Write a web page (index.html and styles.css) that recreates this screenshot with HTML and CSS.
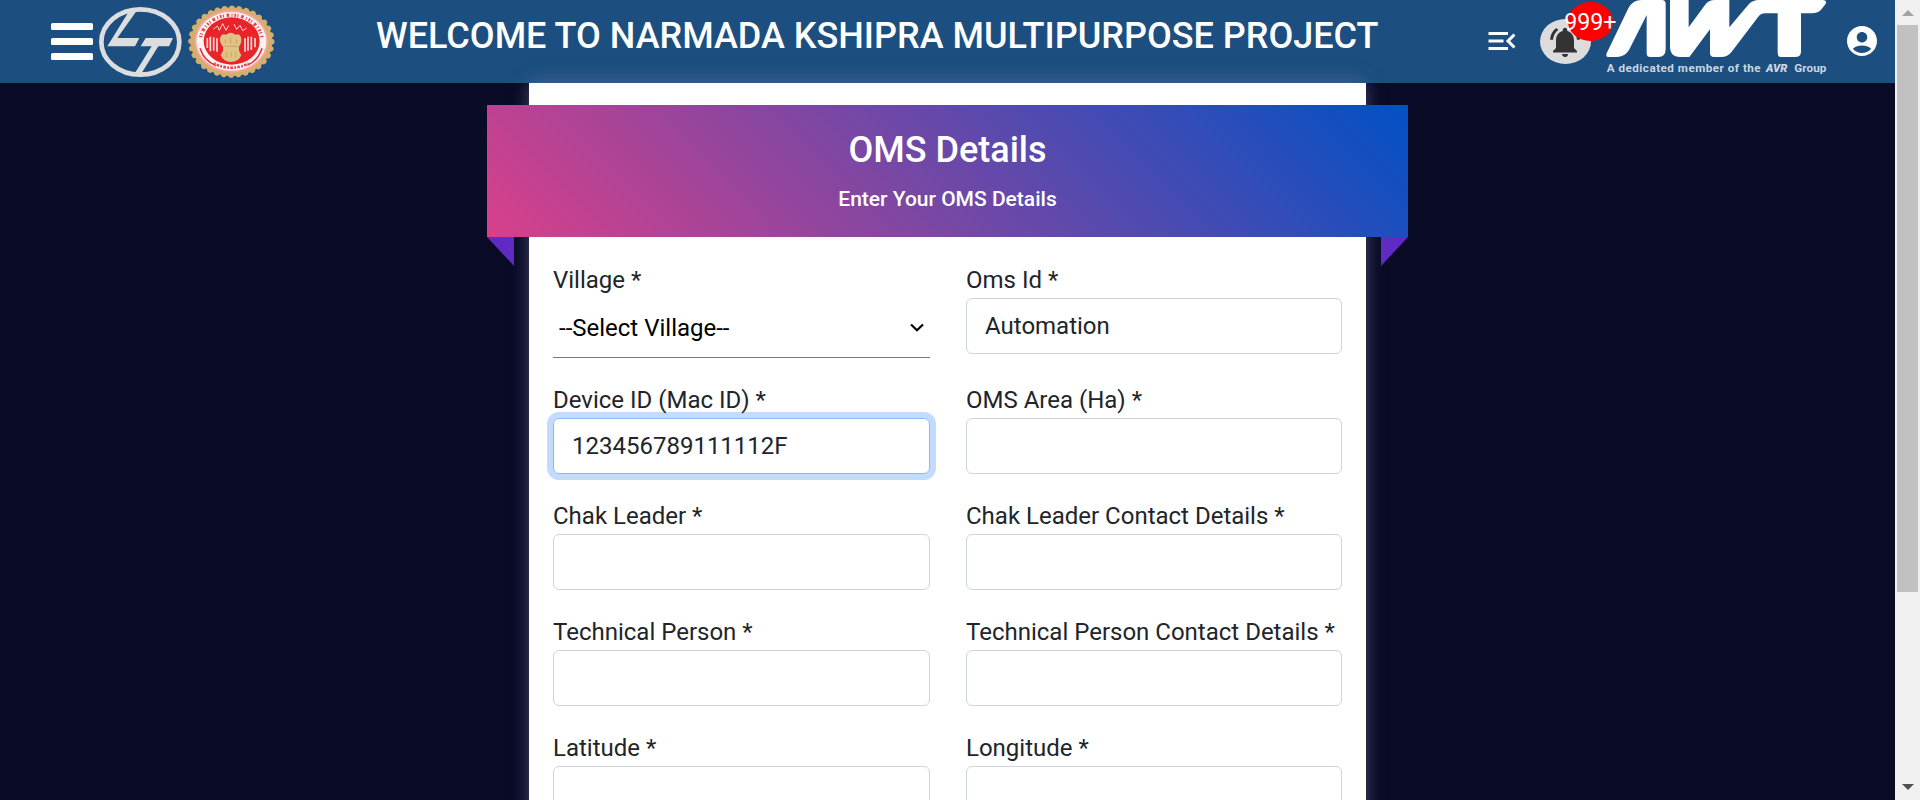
FILE: index.html
```html
<!DOCTYPE html>
<html lang="en">
<head>
<meta charset="utf-8">
<title>OMS Details</title>
<link rel="stylesheet" href="styles.css">
</head>
<body>
<div class="page">
  <header class="header">
    <div class="burger"><span></span><span></span><span></span></div>
    <svg class="logo-lt" viewBox="297 17 249 216">
      <g fill="#dcdddf"><path d="M386 34L408 34L352 113L418 113L405 138L322 138Z"/><path d="M437 113L519 113L507 138L475 138L425 218L405 218L455 138L422 138Z"/></g>
      <ellipse cx="421" cy="125" rx="117" ry="98" fill="none" stroke="#dcdddf" stroke-width="14"/>
    </svg>
    <svg class="emblem" viewBox="561 12 267 225">
      <ellipse cx="694" cy="125" rx="123" ry="103" fill="#d5ae69"/>
      <ellipse cx="694" cy="125" rx="121" ry="100" fill="none" stroke="#d5ae69" stroke-width="17" stroke-linecap="round" stroke-dasharray="0.1 21.68"/>
      <ellipse cx="694" cy="124" rx="111" ry="94" fill="#f5a3a3"/>
      <ellipse cx="694" cy="124" rx="105" ry="88" fill="#fff3f1"/>
      <path d="M602 112A93 78 0 0 1 786 112" fill="none" stroke="#e5464b" stroke-width="10" stroke-dasharray="5 4 3 8 8 7 3 6"/>
      <path d="M642 190A93 78 0 0 0 746 190" fill="none" stroke="#e5464b" stroke-width="8" stroke-dasharray="5 4 8 4"/>
      <ellipse cx="695" cy="123" rx="84" ry="71" fill="#e8232a"/>
      <g fill="none" stroke="#ffdcd9" stroke-width="5"><path d="M622 114v30M631 110v44M641 112v40M651 115v40M735 115v40M744 110v42M754 110v40M765 114v28"/><path d="M640 88l12-10 6 13 10-20 10 20 8-14M702 72l8 16 10-12 8 16 12-8" stroke-width="3"/></g>
      <path d="M600 145q12 38 48 52M786 145q-10 35-44 51" fill="none" stroke="#e5353a" stroke-width="5"/>
      <path d="M661 112q4-12 17-8 15-12 28 0 13-4 17 8 4 16-6 28v12l7 14q-8 20-31 20t-31-20l7-14v-12q-12-12-8-28z" fill="#dfc284"/>
      <path d="M676 118v12M692 112v18M710 118v12M673 139h42M680 157v16M693 157v16M706 157v16" stroke="#c7a567" stroke-width="3"/>
    </svg>
    <h1 class="title">WELCOME TO NARMADA KSHIPRA MULTIPURPOSE PROJECT</h1>
    <svg class="icon menu-open" viewBox="0 0 24 24"><path d="M3 18h13v-2H3v2zM3 13h10v-2H3v2zm0-7v2h13V6H3zm18 9.59L17.42 12 21 8.41 19.59 7l-5 5 5 5L21 15.59z"/></svg>
    <div class="bell">
      <svg class="icon bell-icon" viewBox="0 0 24 24"><path d="M7.58 4.08L6.15 2.65C3.75 4.48 2.17 7.3 2.03 10.5h2c.15-2.65 1.51-4.97 3.55-6.42zm12.39 6.42h2c-.15-3.2-1.73-6.02-4.12-7.85l-1.42 1.43c2.02 1.45 3.39 3.77 3.54 6.42zM18 11c0-3.07-1.64-5.64-4.5-6.32V4c0-.83-.67-1.5-1.5-1.5s-1.5.67-1.5 1.5v.68C7.63 5.36 6 7.92 6 11v5l-2 2v1h16v-1l-2-2v-5zm-6 11c.14 0 .27-.01.4-.04.65-.14 1.18-.58 1.44-1.18.1-.24.15-.5.15-.78h-4c.01 1.1.9 2 2.01 2z"/></svg>
      <span class="badge">999+</span>
    </div>
    <svg class="logo-awt" viewBox="438 0 663 249">
      <g fill="#fff">
        <path d="M440 160L505 25Q518 0 545 0H605Q617 0 617 12V148Q617 171 595 171H570Q560 171 560 160V45L507 150Q494 171 470 171H446Q436 171 440 160Z"/>
        <path d="M630 0H686V82L735 15Q745 0 765 0H808V82L865 14Q877 0 897 0H1090Q1103 2 1096 13L1085 27Q1075 40 1055 40H1023V155Q1023 171 1005 171H965Q953 171 953 160V40H915Q903 40 896 49L815 155Q803 171 783 171H762Q750 171 750 160V88L688 171H660Q630 171 630 138Z"/>
      </g>
      <g class="tagline">
        <text x="440" y="216" textLength="462">A dedicated member of the</text>
        <text class="avr" x="918" y="215" textLength="64" lengthAdjust="spacingAndGlyphs">AVR</text>
        <text x="1003" y="216" textLength="96">Group</text>
      </g>
    </svg>
    <svg class="icon account" viewBox="0 0 24 24"><path d="M12 2C6.48 2 2 6.48 2 12s4.48 10 10 10 10-4.48 10-10S17.52 2 12 2zm0 4c1.93 0 3.5 1.57 3.5 3.5S13.93 13 12 13s-3.5-1.57-3.5-3.5S10.07 6 12 6zm0 14c-2.03 0-4.43-.82-6.14-2.88C7.55 15.8 9.68 15 12 15s4.45.8 6.14 2.12C16.43 19.18 14.03 20 12 20z"/></svg>
  </header>
  <main class="card">
    <div class="banner">
      <h2>OMS Details</h2>
      <p>Enter Your OMS Details</p>
    </div>
    <form class="form">
      <div class="field"><label>Village *</label>
        <div class="select"><span>--Select Village--</span><svg class="chevron" viewBox="0 0 14 9"><path d="M1 1.5L7 7.2L13 1.5"/></svg></div></div>
      <div class="field"><label>Oms Id *</label><div class="input">Automation</div></div>
      <div class="field"><label>Device ID (Mac ID) *</label><div class="input focused">123456789111112F</div></div>
      <div class="field"><label>OMS Area (Ha) *</label><div class="input"></div></div>
      <div class="field"><label>Chak Leader *</label><div class="input"></div></div>
      <div class="field"><label>Chak Leader Contact Details *</label><div class="input"></div></div>
      <div class="field"><label>Technical Person *</label><div class="input"></div></div>
      <div class="field"><label>Technical Person Contact Details *</label><div class="input"></div></div>
      <div class="field"><label>Latitude *</label><div class="input"></div></div>
      <div class="field"><label>Longitude *</label><div class="input"></div></div>
    </form>
  </main>
</div>
<div class="scrollbar">
  <svg class="arrow" viewBox="0 0 12 6"><path fill="#a3a3a3" d="M0 6L6 0L12 6Z"/></svg>
  <div class="thumb"></div>
  <svg class="arrow down" viewBox="0 0 12 6"><path fill="#505050" d="M0 0L6 6L12 0Z"/></svg>
</div>
</body>
</html>
```
FILE: styles.css
```css
* { box-sizing: border-box; }
body {
  margin: 0;
  height: 800px;
  display: flex;
  overflow: hidden;
  background: #0a0b26;
  color: #212529;
  font-family: Roboto, "Liberation Sans", sans-serif;
  font-size: 24px;
  line-height: 36px;
}
h1, h2, p { margin: 0; }
svg { display: block; flex: none; }

.page { width: 1895px; height: 800px; overflow: hidden; }

.header {
  display: flex;
  align-items: flex-start;
  height: 83px;
  padding-left: 51px;
  background: #1c4f7f;
}
.burger { display: flex; flex-direction: column; gap: 8px; margin-top: 22.6px; width: 42px; }
.burger span { height: 7px; border-radius: 1.5px; background: #fff; }
.logo-lt { width: 83px; height: 72px; margin: 5.7px 0 0 6px; }
.emblem { width: 89px; height: 75px; margin: 4px 0 0 5px; }
.title {
  width: 1003px;
  margin: 14px 0 0 100px;
  color: #fff;
  font-size: 36px;
  font-weight: 500;
  line-height: 44px;
  white-space: nowrap;
}
.icon { width: 36px; height: 36px; fill: #fff; }
.menu-open { margin: 22.7px 0 0 104.8px; }
.bell {
  position: relative;
  flex: none;
  width: 51px;
  height: 45px;
  margin: 19px 0 0 20px;
  padding: 5px 0 0 7.5px;
  border-radius: 50%;
  background: #dcdcdc;
}
.bell-icon { fill: #333; }
.badge {
  position: absolute;
  left: 28px;
  top: -17px;
  display: flex;
  justify-content: center;
  align-items: center;
  width: 45px;
  height: 39px;
  border-radius: 50%;
  background: #f00;
  color: #fff;
  font-size: 23.2px;
}
.logo-awt { width: 221px; height: 83px; margin-left: 15px; }
.tagline { fill: #ccd6e1; font: bold 35px "Liberation Sans Narrow", Roboto, sans-serif; }
.avr { font-style: italic; font-weight: 900; }
.account { margin: 23px 0 0 17px; }

.card {
  width: 837px;
  height: 900px;
  margin-left: 529px;
  padding-top: 22px;
  background: #fff;
  box-shadow: 0 0 16px rgba(115, 120, 165, .55);
}
.banner {
  position: relative;
  height: 132px;
  margin: 0 -42px;
  padding-top: 24px;
  background: linear-gradient(45deg, #d9408a, #0250c5);
  color: #fff;
  text-align: center;
}
.banner::before, .banner::after {
  content: "";
  position: absolute;
  top: 100%;
  width: 27px;
  height: 29px;
  background: #5f2bc4;
}
.banner::before { left: 0; clip-path: polygon(0 0, 100% 0, 100% 100%); }
.banner::after { right: 0; clip-path: polygon(0 0, 100% 0, 0 100%); }
.banner h2 { font-size: 36px; font-weight: 500; line-height: 43px; }
.banner p { margin-top: 12px; font-size: 21px; font-weight: 500; line-height: 31px; }

.form {
  display: grid;
  grid-template-columns: 377px 376px;
  gap: 24px 36px;
  padding: 25px 24px 0;
}
.field label { display: block; white-space: nowrap; }
.input {
  height: 56px;
  padding: 9px 18px;
  border: 1px solid #ced4da;
  border-radius: 6px;
}
.focused { border-color: #86b7fe; box-shadow: 0 0 0 6px #c2dbff; }
.select {
  display: flex;
  align-items: center;
  justify-content: space-between;
  height: 60px;
  padding: 0 6px;
  border-bottom: 1px solid #767676;
  color: #000;
}
.chevron { width: 14px; height: 9px; fill: none; stroke: #000; stroke-width: 2.2; }

.scrollbar {
  display: flex;
  flex-direction: column;
  align-items: center;
  width: 25px;
  padding: 10px 0;
  background: #f0f0f0;
}
.arrow { width: 12px; height: 6px; }
.thumb { width: 21px; height: 567px; margin-top: 9px; background: #c1c1c1; }
.down { margin-top: auto; }
```
